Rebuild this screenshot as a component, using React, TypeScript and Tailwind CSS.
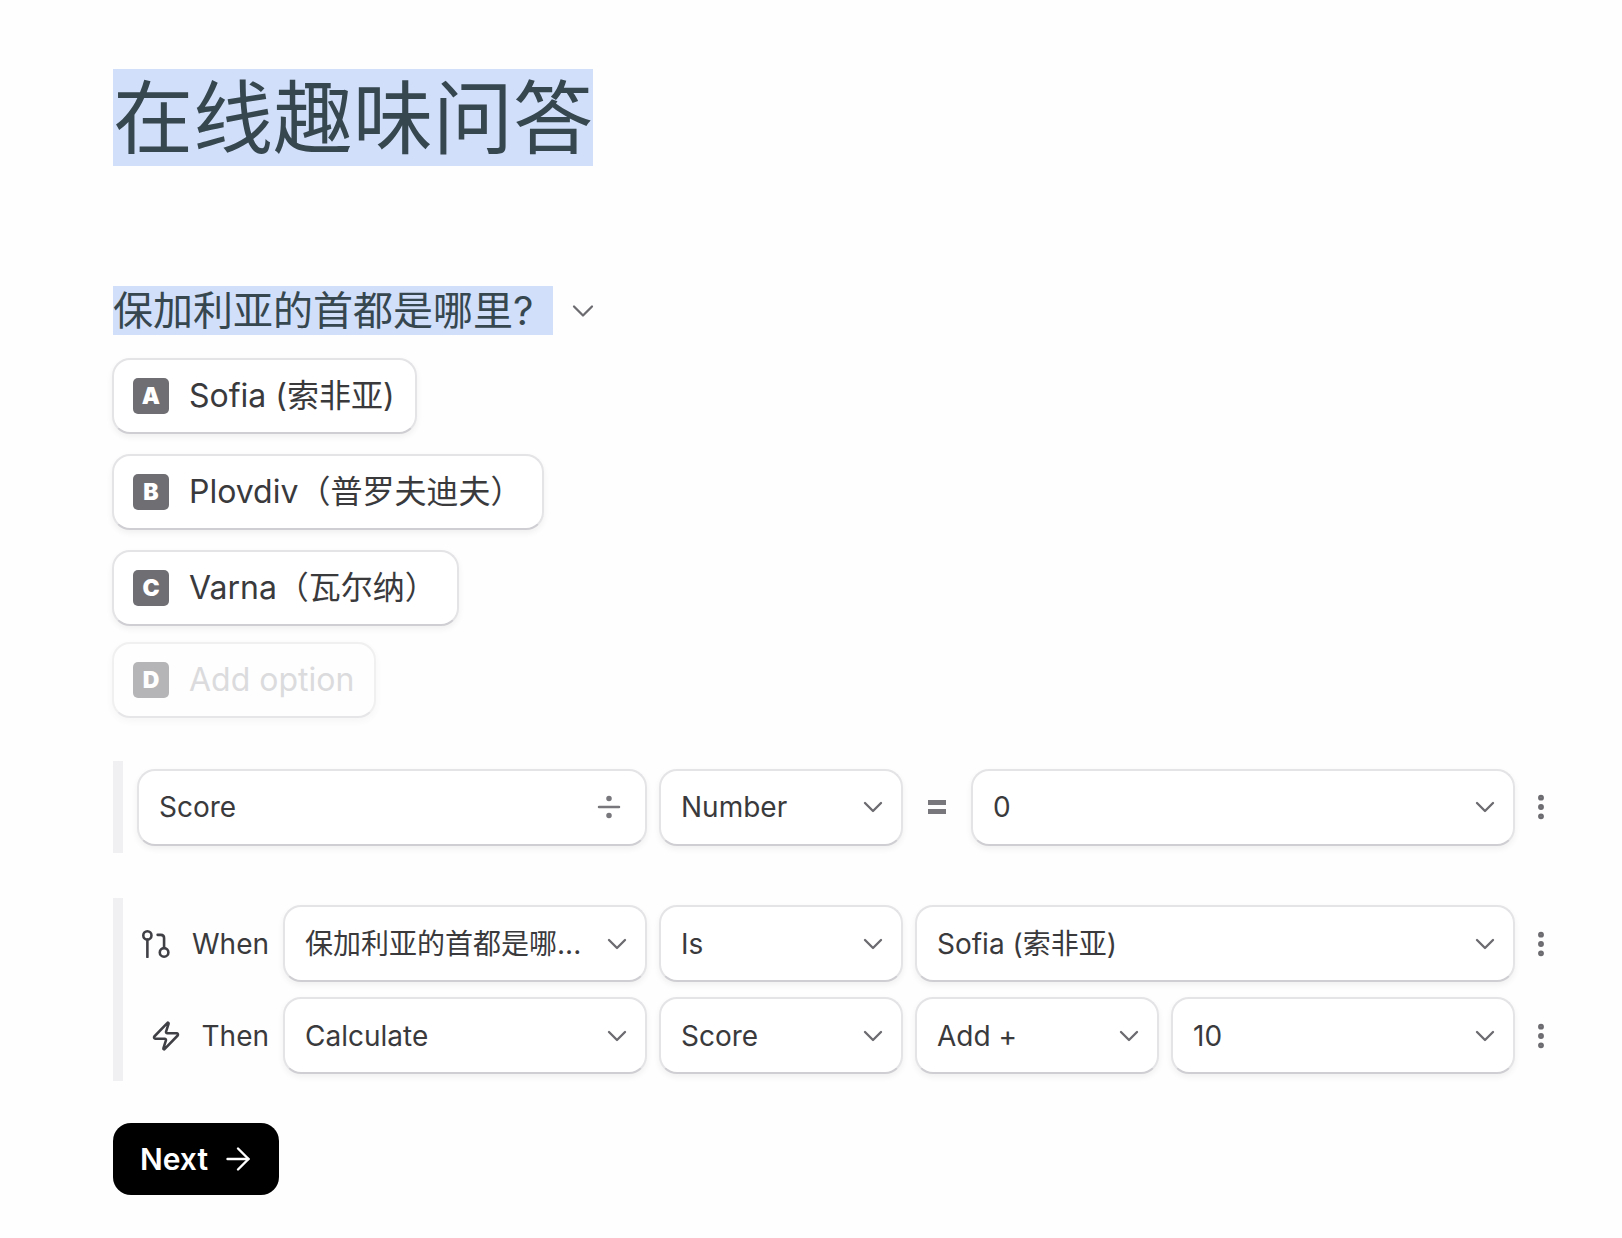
import React from 'react';
import { ChevronDown, Divide, EllipsisVertical, Zap, ArrowRight } from 'lucide-react';

const fontStack = 'font-[Inter,"Noto_Sans_CJK_SC",sans-serif]';

// when-icon: pin on the left, hook into a ring on the right
const BranchIcon = () => (
  <svg width="28" height="28" viewBox="0 0 26 26" fill="none" stroke="#3f3f46" strokeWidth="2.4" strokeLinecap="round" strokeLinejoin="round">
    <circle cx="5" cy="5" r="3.8" />
    <path d="M5 8.800V25" />
    <path d="M14.500 4.500h3c2 0 3 1 3 3V16.500" />
    <circle cx="20.500" cy="20.800" r="4" />
  </svg>
);

const EqualBars = () => (
  <svg width="18" height="14" viewBox="0 0 18 14" fill="#77777c" className="mx-[25px] shrink-0">
    <rect x="0" y="0" width="18" height="5" />
    <rect x="0" y="9" width="18" height="5" />
  </svg>
);

const Option = ({ letter, label, width, faded, className }: { letter: string; label: string; width: string; faded?: boolean; className?: string }) => (
  <div
    className={`-ml-px flex h-[76px] items-center rounded-[18px] border-2 border-[#e4e3e6] border-b-[#cfced2] bg-white pl-[19px] shadow-[0_3px_6px_rgba(0,0,0,0.06)] ${width} ${faded ? 'opacity-50' : ''} ${className ?? ''}`}
  >
    <span className="flex h-9 w-9 shrink-0 items-center justify-center rounded-[5px] bg-[#6f6e72] text-[23px] font-black leading-none text-white">
      {letter}
    </span>
    <span className={`ml-[20px] whitespace-nowrap text-[32px] leading-none ${faded ? 'text-[#b9b9bd]' : 'text-[#3a3a3d]'}`}>{label}</span>
  </div>
);

const Select = ({ label, width, icon }: { label: string; width: string; icon?: React.ReactNode }) => (
  <div
    className={`flex h-[77px] shrink-0 items-center justify-between rounded-[18px] border-2 border-[#e4e3e6] border-b-[#cfced2] bg-white pl-[20px] pr-[12px] shadow-[0_3px_6px_rgba(0,0,0,0.06)] ${width}`}
  >
    <span className="whitespace-nowrap text-[28px] leading-none text-[#3a3a3d]">{label}</span>
    {icon ?? <ChevronDown size={32} strokeWidth={1.75} className="text-[#6b6b70]" />}
  </div>
);

const Dots = () => <EllipsisVertical size={32} strokeWidth={2.4} className="ml-[10px] text-[#6b6b70]" />;

export default function App() {
  return (
    <div className={`min-h-[1238px] bg-[#fefefe] pl-[113px] pt-[69px] ${fontStack}`}>
      <h1 className="w-fit bg-[#d1dffa] text-[80px] font-normal leading-[97px] text-[#37474f]">在线趣味问答</h1>

      <div className="mt-[120px] flex items-center">
        <h2 className="bg-[#d1dffa] pr-[20px] text-[40px] font-normal leading-[49px] text-[#37474f]">保加利亚的首都是哪里?</h2>
        <ChevronDown size={36} strokeWidth={1.5} className="ml-[12px] text-[#6b6b70]" />
      </div>

      <div className="mt-[23px] flex flex-col items-start">
        <Option letter="A" label="Sofia (索非亚)" width="w-[305px]" />
        <Option letter="B" label="Plovdiv（普罗夫迪夫）" width="w-[432px]" className="mt-[20px]" />
        <Option letter="C" label="Varna（瓦尔纳）" width="w-[347px]" className="mt-[20px]" />
        <Option letter="D" label="Add option" width="w-[264px]" faded className="mt-[16px]" />
      </div>

      <div className="mt-[43px] flex h-[92px] w-[1450px] items-center border-l-[10px] border-[#f0eff1] pl-[14px]">
        <Select label="Score" width="w-[510px]" icon={<Divide size={34} strokeWidth={1.9} className="mr-[7px] text-[#77777c]" />} />
        <Select label="Number" width="ml-[12px] w-[244px]" />
        <EqualBars />
        <Select label="0" width="w-[544px]" />
        <Dots />
      </div>

      <div className="mt-[45px] flex h-[183px] w-[1450px] flex-col justify-center gap-[15px] border-l-[10px] border-[#f0eff1] pl-[14px]">
        <div className="flex items-center">
          <div className="flex w-[146px] shrink-0 items-center justify-end gap-[22px] pr-[14px]">
            <BranchIcon />
            <span className="text-[28px] leading-none text-[#3a3a3d]">When</span>
          </div>
          <Select label="保加利亚的首都是哪..." width="w-[364px]" />
          <Select label="Is" width="ml-[12px] w-[244px]" />
          <Select label="Sofia (索非亚)" width="ml-[12px] w-[600px]" />
          <Dots />
        </div>
        <div className="flex items-center">
          <div className="flex w-[146px] shrink-0 items-center justify-end gap-[20px] pr-[14px]">
            <Zap size={32} strokeWidth={1.9} className="text-[#3f3f46]" />
            <span className="text-[28px] leading-none text-[#3a3a3d]">Then</span>
          </div>
          <Select label="Calculate" width="w-[364px]" />
          <Select label="Score" width="ml-[12px] w-[244px]" />
          <Select label="Add +" width="ml-[12px] w-[244px]" />
          <Select label="10" width="ml-[12px] w-[344px]" />
          <Dots />
        </div>
      </div>

      <button className="mt-[42px] flex h-[72px] w-[166px] items-center justify-center gap-[12px] rounded-[18px] bg-black pl-[4px] text-[30px] font-semibold leading-none text-white">
        Next
        <ArrowRight size={36} strokeWidth={1.6} />
      </button>
    </div>
  );
}
